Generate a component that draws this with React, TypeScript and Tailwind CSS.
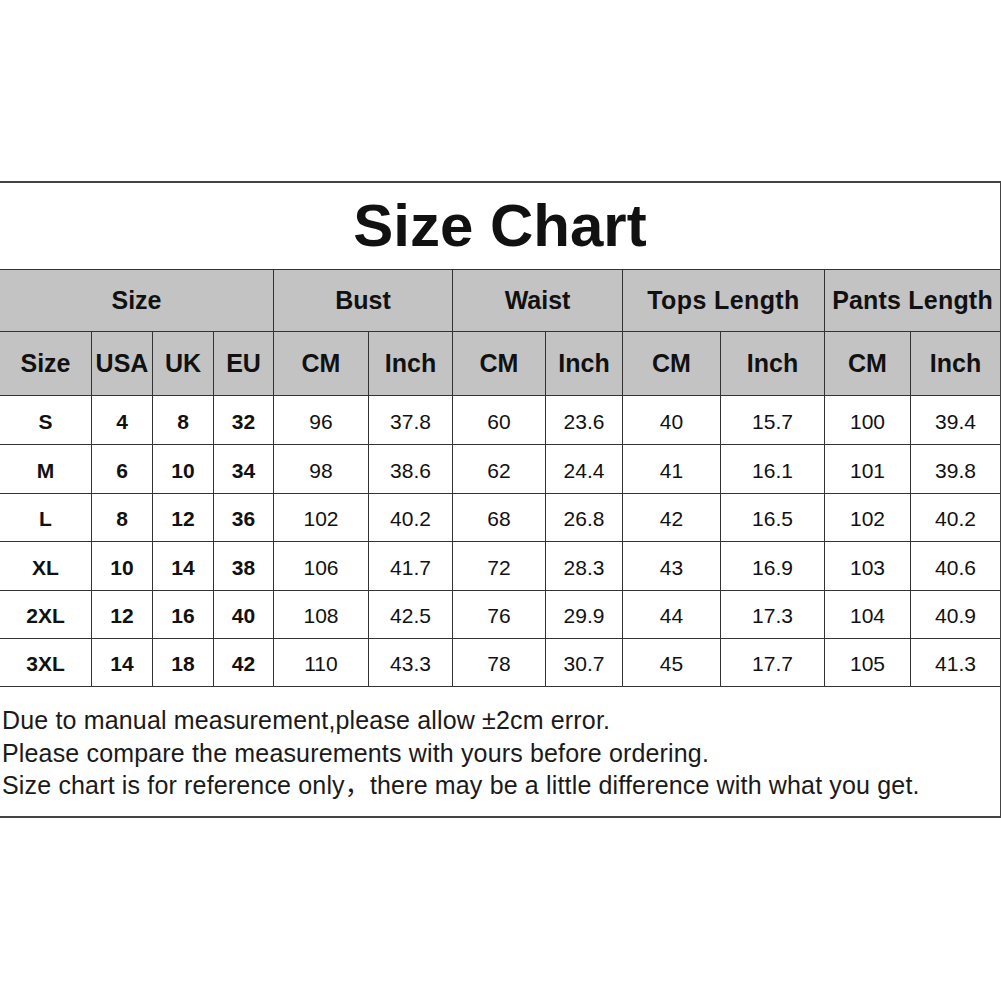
import React from "react";

const rows = [
  ["S", "4", "8", "32", "96", "37.8", "60", "23.6", "40", "15.7", "100", "39.4"],
  ["M", "6", "10", "34", "98", "38.6", "62", "24.4", "41", "16.1", "101", "39.8"],
  ["L", "8", "12", "36", "102", "40.2", "68", "26.8", "42", "16.5", "102", "40.2"],
  ["XL", "10", "14", "38", "106", "41.7", "72", "28.3", "43", "16.9", "103", "40.6"],
  ["2XL", "12", "16", "40", "108", "42.5", "76", "29.9", "44", "17.3", "104", "40.9"],
  ["3XL", "14", "18", "42", "110", "43.3", "78", "30.7", "45", "17.7", "105", "41.3"],
];

const subHeads = ["Size", "USA", "UK", "EU", "CM", "Inch", "CM", "Inch", "CM", "Inch", "CM", "Inch"];

export default function App() {
  return (
    <div
      className="w-full min-h-[1001px] bg-white pt-[181px] text-[#111]"
      style={{ fontFamily: '"Liberation Sans", Arial, "Noto Sans CJK SC", sans-serif' }}
    >
      <div className="w-[1001px] border-t-2 border-b-2 border-r border-[#444]">
        {/* Title */}
        <div className="h-[86px] flex items-center justify-center">
          <h1 className="text-[60px] font-bold leading-none">Size Chart</h1>
        </div>

        {/* Table */}
        <div className="grid grid-cols-[91px_60px_60px_59px_94px_83px_92px_76px_97px_103px_85px_89px] grid-rows-[61px_63px_48px_48px_47px_48px_47px_47px] gap-px bg-[#333] py-px">
          <div className="col-span-4 bg-[#c3c3c3] flex items-center justify-center text-[25px] font-bold">Size</div>
          <div className="col-span-2 bg-[#c3c3c3] flex items-center justify-center text-[25px] font-bold">Bust</div>
          <div className="col-span-2 bg-[#c3c3c3] flex items-center justify-center text-[25px] font-bold">Waist</div>
          <div className="col-span-2 bg-[#c3c3c3] flex items-center justify-center text-[25px] font-bold tracking-[0.4px]">Tops Length</div>
          <div className="col-span-2 bg-[#c3c3c3] flex items-center justify-center text-[25px] font-bold tracking-[0.2px]">Pants Length</div>

          {subHeads.map((h, i) => (
            <div key={i} className="bg-[#c3c3c3] flex items-center justify-center text-[25px] font-bold">
              {h}
            </div>
          ))}

          {rows.map((r, ri) =>
            r.map((v, ci) => (
              <div
                key={ri + "-" + ci}
                className={
                  ci < 4
                    ? "bg-white flex items-center justify-center text-[21px] font-bold pt-[3px]"
                    : "bg-white flex items-center justify-center text-[21px] pt-[3px]"
                }
              >
                {v}
              </div>
            ))
          )}
        </div>

        {/* Notes */}
        <div className="h-[129px] pl-[2px] pt-[17px] text-[25px] leading-[32.5px] tracking-[0.16px] text-[#1a1a1a]">
          <p>Due to manual measurement,please allow ±2cm error.</p>
          <p>Please compare the measurements with yours before ordering.</p>
          <p>Size chart is for reference only，there may be a little difference with what you get.</p>
        </div>
      </div>
    </div>
  );
}
